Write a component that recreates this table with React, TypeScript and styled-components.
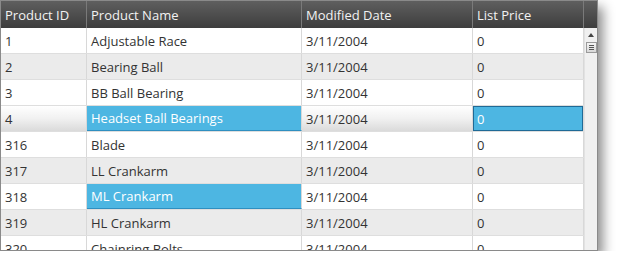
import styled, { createGlobalStyle, css } from "styled-components"

const GlobalStyle = createGlobalStyle`
  html, body {
    margin: 0;
    padding: 0;
    background: #ffffff;
  }
  body {
    font-family: "Open Sans", "Noto Sans", sans-serif;
  }
`

type Row = {
  id: string
  name: string
  date: string
  price: string
  selected?: boolean
  nameActive?: boolean
}

const rows: Row[] = [
  { id: "1", name: "Adjustable Race", date: "3/11/2004", price: "0" },
  { id: "2", name: "Bearing Ball", date: "3/11/2004", price: "0" },
  { id: "3", name: "BB Ball Bearing", date: "3/11/2004", price: "0" },
  { id: "4", name: "Headset Ball Bearings", date: "3/11/2004", price: "0", selected: true },
  { id: "316", name: "Blade", date: "3/11/2004", price: "0" },
  { id: "317", name: "LL Crankarm", date: "3/11/2004", price: "0" },
  { id: "318", name: "ML Crankarm", date: "3/11/2004", price: "0", nameActive: true },
  { id: "319", name: "HL Crankarm", date: "3/11/2004", price: "0" },
  { id: "320", name: "Chainring Bolts", date: "3/11/2004", price: "0" },
]

const columns = "86px 215px 171px 111px"

const App = () => {
  return (
    <>
      <GlobalStyle />
      <Frame>
        <Header>
          <HeadCell>Product ID</HeadCell>
          <HeadCell>Product Name</HeadCell>
          <HeadCell>Modified Date</HeadCell>
          <HeadCell>List Price</HeadCell>
          <HeadFiller />
        </Header>
        <Body>
          <Rows>
            {rows.map((r, i) => (
              <GridRow key={r.id} $alt={i % 2 === 1}>
                <Cell $tone={r.selected ? "soft" : "none"}>{r.id}</Cell>
                <Cell $tone={r.selected || r.nameActive ? "blue" : "none"}>{r.name}</Cell>
                <Cell $tone={r.selected ? "soft" : "none"}>{r.date}</Cell>
                <Cell $tone={r.selected ? "focus" : "none"}>{r.price}</Cell>
              </GridRow>
            ))}
          </Rows>
          <ScrollTrack>
            <ArrowUp />
            <Thumb>
              <Grip />
              <Grip />
              <Grip />
            </Thumb>
          </ScrollTrack>
        </Body>
      </Frame>
    </>
  )
}

export default App

const Frame = styled.div`
  width: 598px;
  height: 251px;
  border: 1px solid #8a8a8a;
  box-sizing: border-box;
  overflow: hidden;
  display: flex;
  flex-direction: column;
  background: #ffffff;
  box-shadow: 5px 7px 11px rgba(0, 0, 0, 0.45);
`
const Header = styled.div`
  display: grid;
  grid-template-columns: ${columns} 1fr;
  height: 27px;
  flex-shrink: 0;
  background: linear-gradient(#5f5f5f, #3d3d3d);
`
const HeadCell = styled.div`
  display: flex;
  align-items: center;
  padding-left: 4px;
  border-right: 1px solid #7a7a7a;
  color: #f2f2f2;
  font-size: 13px;
  white-space: nowrap;
`
const HeadFiller = styled.div``
const Body = styled.div`
  flex: 1;
  display: flex;
  overflow: hidden;
`
const Rows = styled.div`
  display: flex;
  flex-direction: column;
`
const GridRow = styled.div<{ $alt: boolean }>`
  display: grid;
  grid-template-columns: ${columns};
  height: 26px;
  flex-shrink: 0;
  background: ${(p) => (p.$alt ? "#ebebeb" : "#ffffff")};
  border-bottom: 1px solid #dedede;
  box-sizing: border-box;
`
const toneStyles = {
  none: css``,
  soft: css`
    background: linear-gradient(#ffffff, #f1f1f1 50%, #dadada);
  `,
  blue: css`
    background: #4db6e2;
    color: #ffffff;
    border-bottom: 1px solid #2f8fc0;
  `,
  focus: css`
    background: #4db6e2;
    color: #ffffff;
    box-shadow: inset 0 0 0 1px #1f6a96;
  `,
}
const Cell = styled.div<{ $tone: keyof typeof toneStyles }>`
  display: flex;
  align-items: center;
  padding-left: 4px;
  border-right: 1px solid #d8d8d8;
  color: #333333;
  font-size: 13px;
  white-space: nowrap;
  overflow: hidden;
  ${(p) => toneStyles[p.$tone]}
`
const ScrollTrack = styled.div`
  flex: 1;
  display: flex;
  flex-direction: column;
  align-items: center;
  background: #f0f0f0;
  border-left: 1px solid #e2e2e2;
  padding-top: 5px;
`
const ArrowUp = styled.div`
  width: 0;
  height: 0;
  border-left: 3px solid transparent;
  border-right: 3px solid transparent;
  border-bottom: 4px solid #444444;
`
const Thumb = styled.div`
  margin-top: 5px;
  width: 9px;
  height: 9px;
  border: 1px solid #9a9a9a;
  background: linear-gradient(#f4f4f4, #d8d8d8);
  display: flex;
  flex-direction: column;
  justify-content: center;
  align-items: center;
  gap: 1px;
`
const Grip = styled.div`
  width: 5px;
  height: 1px;
  background: #555555;
`
